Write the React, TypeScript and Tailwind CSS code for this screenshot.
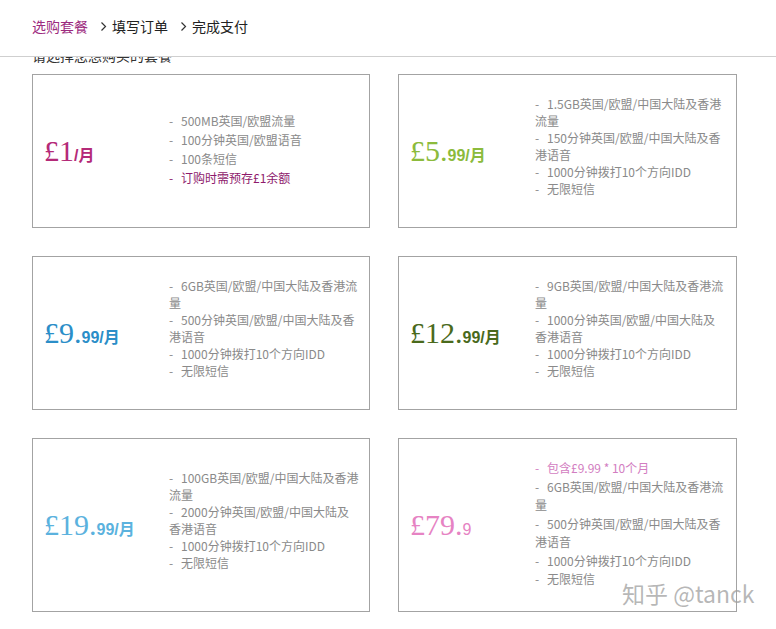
import React from "react";

type Feature = { lines: string[]; color?: string };

type Plan = {
  big: string;
  small: string;
  smallBold: boolean;
  color: string;
  leading: string;
  listPad: string;
  features: Feature[];
};

const plans: Plan[] = [
  {
    big: "£1",
    small: "/月",
    smallBold: true,
    color: "text-[#b42a78]",
    leading: "leading-[19px]",
    listPad: "pb-[4px]",
    features: [
      { lines: ["500MB英国/欧盟流量"] },
      { lines: ["100分钟英国/欧盟语音"] },
      { lines: ["100条短信"] },
      { lines: ["订购时需预存£1余额"], color: "text-[#8e1a6c]" },
    ],
  },
  {
    big: "£5.",
    small: "99/月",
    smallBold: true,
    color: "text-[#8cbb3c]",
    leading: "leading-[17px]",
    listPad: "pb-[10px]",
    features: [
      { lines: ["1.5GB英国/欧盟/中国大陆及香港", "流量"] },
      { lines: ["150分钟英国/欧盟/中国大陆及香", "港语音"] },
      { lines: ["1000分钟拨打10个方向IDD"] },
      { lines: ["无限短信"] },
    ],
  },
  {
    big: "£9.",
    small: "99/月",
    smallBold: true,
    color: "text-[#2b8ec8]",
    leading: "leading-[17px]",
    listPad: "pb-[10px]",
    features: [
      { lines: ["6GB英国/欧盟/中国大陆及香港流", "量"] },
      { lines: ["500分钟英国/欧盟/中国大陆及香", "港语音"] },
      { lines: ["1000分钟拨打10个方向IDD"] },
      { lines: ["无限短信"] },
    ],
  },
  {
    big: "£12.",
    small: "99/月",
    smallBold: true,
    color: "text-[#4a6a1c]",
    leading: "leading-[17px]",
    listPad: "pb-[10px]",
    features: [
      { lines: ["9GB英国/欧盟/中国大陆及香港流", "量"] },
      { lines: ["1000分钟英国/欧盟/中国大陆及", "香港语音"] },
      { lines: ["1000分钟拨打10个方向IDD"] },
      { lines: ["无限短信"] },
    ],
  },
  {
    big: "£19.",
    small: "99/月",
    smallBold: true,
    color: "text-[#5bb2de]",
    leading: "leading-[17px]",
    listPad: "pb-[10px]",
    features: [
      { lines: ["100GB英国/欧盟/中国大陆及香港", "流量"] },
      { lines: ["2000分钟英国/欧盟/中国大陆及", "香港语音"] },
      { lines: ["1000分钟拨打10个方向IDD"] },
      { lines: ["无限短信"] },
    ],
  },
  {
    big: "£79.",
    small: "9",
    smallBold: false,
    color: "text-[#e683c3]",
    leading: "leading-[18.5px]",
    listPad: "pb-[2px]",
    features: [
      { lines: ["包含£9.99 * 10个月"], color: "text-[#d27dc1]" },
      { lines: ["6GB英国/欧盟/中国大陆及香港流", "量"] },
      { lines: ["500分钟英国/欧盟/中国大陆及香", "港语音"] },
      { lines: ["1000分钟拨打10个方向IDD"] },
      { lines: ["无限短信"] },
    ],
  },
];

const Chevron: React.FC = () => (
  <svg width="7" height="11" viewBox="0 0 7 11" className="ml-[12px] mr-[5px]">
    <polyline points="1.5,1.5 5.5,5.5 1.5,9.5" fill="none" stroke="#333" strokeWidth="1.2" />
  </svg>
);

const PlanCard: React.FC<{ plan: Plan }> = ({ plan }) => (
  <div className="flex items-center border border-[#a3a3a3] py-[20px] bg-white">
    <div className={`w-[136px] shrink-0 pl-[11px] ${plan.color} whitespace-nowrap`}>
      <span className="text-[30px] leading-none font-['Liberation_Serif',serif]">{plan.big}</span>
      <span
        className={`text-[16px] leading-none font-['Liberation_Sans','Noto_Sans_CJK_SC',sans-serif] ${
          plan.smallBold ? "font-bold" : "font-normal"
        }`}
      >
        {plan.small}
      </span>
    </div>
    <ul
      className={`${plan.listPad} text-[12px] ${plan.leading} text-[#8a8a8a] font-['Noto_Sans_CJK_SC',sans-serif]`}
    >
      {plan.features.map((f, i) => (
        <li key={i} className={`whitespace-nowrap ${f.color ?? ""}`}>
          <span className="inline-block w-[12px]">-</span>
          {f.lines.map((line, j) => (
            <React.Fragment key={j}>
              {j > 0 && <br />}
              {line}
            </React.Fragment>
          ))}
        </li>
      ))}
    </ul>
  </div>
);

export default function App() {
  return (
    <div className="relative h-[629px] w-full overflow-hidden bg-white font-['Noto_Sans_CJK_SC',sans-serif]">
      {/* step header sits over the scrolled content */}
      <header className="relative z-10 flex h-[57px] items-center border-b border-[#cfcfcf] bg-white pl-[32px] pb-[4px] text-[14px] text-[#222]">
        <span className="text-[#9c2a7e]">选购套餐</span>
        <Chevron />
        <span>填写订单</span>
        <Chevron />
        <span>完成支付</span>
      </header>

      <main className="px-[32px]">
        <p className="-mt-[9px] text-[14px] leading-[14px] text-[#333]">请选择您想购买的套餐</p>
        <div className="mt-[12px] grid grid-cols-[338px_339px] gap-x-[28px] gap-y-[28px]">
          {plans.map((p, i) => (
            <PlanCard key={i} plan={p} />
          ))}
        </div>
      </main>

      <div className="absolute left-[622px] top-[582px] z-20 text-[23px] leading-none text-[rgba(160,160,160,0.75)] font-['Noto_Sans_CJK_SC',sans-serif]">
        知乎 @tanck
      </div>
    </div>
  );
}
